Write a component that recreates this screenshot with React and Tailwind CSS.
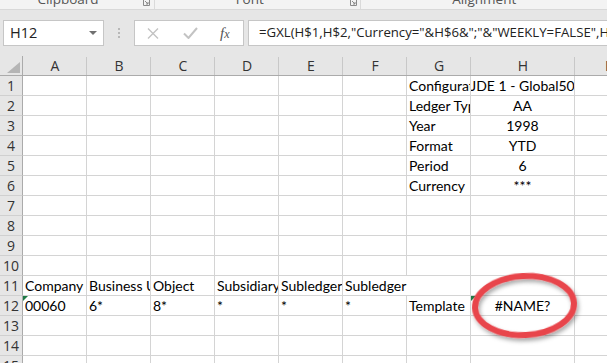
import React from 'react';

const cellFont = { fontFamily: 'Lato, "Liberation Sans", sans-serif' };
const uiFont = { fontFamily: '"Open Sans", "Noto Sans", sans-serif' };

const colLetters = ['A', 'B', 'C', 'D', 'E', 'F', 'G', 'H', 'I'];

// row -> column -> cell spec
const sheet = {
  1: { G: { t: 'Configuration' }, H: { t: 'JDE 1 - Global50', c: true } },
  2: { G: { t: 'Ledger Type' }, H: { t: 'AA', c: true } },
  3: { G: { t: 'Year' }, H: { t: '1998', c: true } },
  4: { G: { t: 'Format' }, H: { t: 'YTD', c: true } },
  5: { G: { t: 'Period' }, H: { t: '6', c: true } },
  6: { G: { t: 'Currency' }, H: { t: '***', c: true } },
  11: {
    A: { t: 'Company' },
    B: { t: 'Business Unit' },
    C: { t: 'Object' },
    D: { t: 'Subsidiary' },
    E: { t: 'Subledger' },
    F: { t: 'Subledger', spill: true },
  },
  12: {
    A: { t: '00060', flag: true },
    B: { t: '6*' },
    C: { t: '8*' },
    D: { t: '*' },
    E: { t: '*' },
    F: { t: '*' },
    G: { t: 'Template' },
    H: { t: '#NAME?', c: true, flag: true },
  },
};

const Cell = ({ spec }) => {
  const spill = spec && spec.spill;
  return (
    <div
      className={
        'relative h-[20px] border-b border-[#d4d4d4] flex items-end pb-[1px] text-[14px] leading-[16px] text-black whitespace-nowrap ' +
        (spill ? 'overflow-visible z-10 ' : 'overflow-hidden border-r ') +
        (spec && spec.c ? 'justify-center px-0' : 'pl-[2px]')
      }
      style={cellFont}
    >
      {spec && spec.flag && (
        <span className="absolute left-0 top-0 w-0 h-0 border-t-[5px] border-t-[#1f7a45] border-r-[5px] border-r-transparent" />
      )}
      {spec ? spec.t : null}
    </div>
  );
};

const Launcher = () => (
  <svg width="7" height="6" viewBox="0 0 7 6">
    <path d="M0.5 0 V5.5 H6.5 V0" fill="none" stroke="#8a8a8a" strokeWidth="1" />
    <path d="M2 1 L5 4 M5 2 V4 H3" fill="none" stroke="#8a8a8a" strokeWidth="1" />
  </svg>
);

export default function App() {
  const rows = Array.from({ length: 15 }, (_, i) => i + 1);
  return (
    <div className="relative w-[607px] h-[363px] overflow-hidden bg-white select-none" style={uiFont}>
      {/* ribbon group labels, cut off at the top */}
      <div className="h-[10px] bg-[#f3f3f3] border-b border-[#d8d8d8] flex overflow-hidden text-[13.5px] leading-[14px] text-[#555]">
        <div className="w-[155px] flex border-r border-[#dadada]">
          <div className="w-[136px] text-center -mt-[8px]">Clipboard</div>
          <div className="pl-[7px]"><Launcher /></div>
        </div>
        <div className="w-[207px] flex border-r border-[#dadada]">
          <div className="w-[190px] text-center -mt-[8px]">Font</div>
          <div className="pl-[5px]"><Launcher /></div>
        </div>
        <div className="w-[246px] text-center -mt-[8px]">Alignment</div>
      </div>

      {/* name box + formula bar */}
      <div className="h-[46px] bg-[#e6e6e6] flex items-start pt-[10px]">
        <div className="ml-[3px] w-[101px] h-[26px] bg-white border border-[#c6c6c6] flex items-center justify-between pl-[6px] pr-[6px]">
          <span className="text-[14.5px] text-[#222]">H12</span>
          <span className="w-0 h-0 border-l-[4px] border-l-transparent border-r-[4px] border-r-transparent border-t-[4px] border-t-[#707070]" />
        </div>
        <div className="w-[30px] h-[26px] flex flex-col items-center justify-center gap-[2px]">
          <span className="w-[2px] h-[2px] bg-[#b8b8b8]" />
          <span className="w-[2px] h-[2px] bg-[#b8b8b8]" />
          <span className="w-[2px] h-[2px] bg-[#b8b8b8]" />
        </div>
        <div className="w-[110px] h-[26px] bg-white border border-[#c6c6c6] flex items-center">
          <svg width="12" height="11" viewBox="0 0 12 11" className="ml-[12px]">
            <path d="M1 0.5 L11 10.5 M11 0.5 L1 10.5" stroke="#c3c3c3" strokeWidth="1.4" fill="none" />
          </svg>
          <svg width="15" height="12" viewBox="0 0 15 12" className="ml-[24px]">
            <path d="M1 6.5 L5.5 11 L14 1" stroke="#c3c3c3" strokeWidth="2" fill="none" />
          </svg>
          <span
            className="ml-[22px] italic text-[15px] leading-none text-[#555]"
            style={{ fontFamily: '"Liberation Serif", serif' }}
          >
            f<span className="text-[12px]">x</span>
          </span>
        </div>
        <div className="ml-[4px] flex-1 h-[26px] bg-white border border-r-0 border-[#c6c6c6] flex items-center pl-[10px] text-[13.2px] text-[#222] whitespace-nowrap overflow-hidden">
          =GXL(H$1,H$2,"Currency="&amp;H$6&amp;";"&amp;"WEEKLY=FALSE",H$3,H$4,H$5)
        </div>
      </div>

      {/* sheet grid */}
      <div className="grid grid-cols-[23px_repeat(7,64px)_104px_64px] auto-rows-[20px]">
        {/* column headers */}
        <div className="relative bg-[#e6e6e6] border-r border-b border-[#ababab]">
          <span className="absolute right-[2px] bottom-[2px] w-0 h-0 border-l-[13px] border-l-transparent border-b-[11px] border-b-[#b5b5b5]" />
        </div>
        {colLetters.map((l) => (
          <div
            key={l}
            className="bg-[#e6e6e6] border-b border-[#ababab] flex items-end justify-center pb-[1px] text-[14px] leading-[17px] text-[#333] relative"
          >
            {l}
            <span className="absolute right-0 top-[1px] bottom-0 w-px bg-[#c8c8c8]" />
          </div>
        ))}

        {rows.map((r) => (
          <React.Fragment key={r}>
            <div className="bg-[#e6e6e6] border-r border-r-[#ababab] border-b border-b-[#d0d0d0] flex items-end justify-center pb-[1px] text-[14px] leading-[17px] text-[#333]">
              {r}
            </div>
            {colLetters.map((l) => (
              <Cell key={l} spec={sheet[r] && sheet[r][l]} />
            ))}
          </React.Fragment>
        ))}
      </div>

      {/* red annotation ring drawn over the sheet */}
      <svg className="absolute left-0 top-0 pointer-events-none" width="607" height="363">
        <defs>
          <filter id="ringShadow" x="-20%" y="-20%" width="140%" height="150%">
            <feDropShadow dx="1.5" dy="3" stdDeviation="2" floodColor="#000" floodOpacity="0.35" />
          </filter>
        </defs>
        <ellipse
          cx="524.5"
          cy="305.5"
          rx="49.5"
          ry="29.5"
          fill="none"
          stroke="#e8454b"
          strokeWidth="6"
          transform="rotate(-3 524.5 305.5)"
          filter="url(#ringShadow)"
        />
      </svg>
    </div>
  );
}
